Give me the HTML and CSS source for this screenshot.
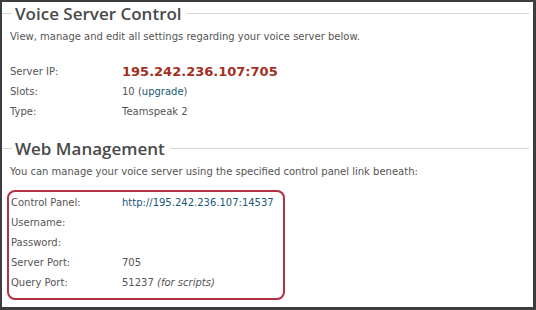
FILE: index.html
```html
<!DOCTYPE html>
<html>
<head>
<meta charset="utf-8">
<link rel="stylesheet" href="styles.css">
</head>
<body>
<div class="frame">
  <section class="block">
    <h2 class="legend"><span>Voice Server Control</span></h2>
    <p class="desc">View, manage and edit all settings regarding your voice server below.</p>
    <div class="rows">
      <div class="row"><span class="label">Server IP:</span><span class="value ipval">195.242.236.107:705</span></div>
      <div class="row"><span class="label">Slots:</span><span class="value">10 (<a class="link">upgrade</a>)</span></div>
      <div class="row"><span class="label">Type:</span><span class="value">Teamspeak 2</span></div>
    </div>
  </section>
  <section class="block second">
    <h2 class="legend"><span>Web Management</span></h2>
    <p class="desc">You can manage your voice server using the specified control panel link beneath:</p>
    <div class="box">
      <div class="row"><span class="label">Control Panel:</span><span class="value"><a class="link">http://195.242.236.107:14537</a></span></div>
      <div class="row"><span class="label">Username:</span><span class="value"></span></div>
      <div class="row"><span class="label">Password:</span><span class="value"></span></div>
      <div class="row"><span class="label">Server Port:</span><span class="value">705</span></div>
      <div class="row"><span class="label">Query Port:</span><span class="value">51237 <em>(for scripts)</em></span></div>
    </div>
  </section>
</div>
</body>
</html>
```

FILE: styles.css
```css
html, body {
  margin: 0;
  padding: 0;
  background: #ffffff;
}
.frame {
  width: 536px;
  height: 310px;
  box-sizing: border-box;
  border-style: solid;
  border-color: #3d3d3d;
  border-width: 2px 3px 3px 2px;
  background: #fff;
  font-family: "DejaVu Sans", sans-serif;
  font-size: 10px;
  color: #555555;
  overflow: hidden;
}
.legend {
  display: flex;
  align-items: center;
  margin: 0;
  height: 22px;
  font-family: "Open Sans", "DejaVu Sans", sans-serif;
  font-size: 17px;
  font-weight: 600;
  color: #4a4a4a;
  padding-right: 4px;
}
.legend::before {
  content: "";
  width: 10px;
  border-top: 1px solid #d6d6d6;
}
.legend::after {
  content: "";
  flex: 1;
  border-top: 1px solid #d6d6d6;
}
.legend span {
  padding: 0 5px 0 3px;
}
.desc {
  margin: 6px 0 0 8px;
  line-height: 14px;
}
.rows {
  margin-top: 17px;
  padding-left: 8px;
}
.row {
  display: flex;
  height: 20px;
  align-items: center;
}
.label {
  width: 112px;
}
.ipval {
  font-size: 13px;
  font-weight: bold;
  color: #a3301e;
}
.link {
  color: #19587a;
}
.second {
  margin-top: 16px;
}
.box {
  margin: 11px 0 0 5px;
  width: 278px;
  height: 110px;
  box-sizing: border-box;
  border: 2px solid #b23145;
  border-radius: 8px;
  padding: 0 0 0 2px;
}
.box .label {
  width: 111px;
}
```
